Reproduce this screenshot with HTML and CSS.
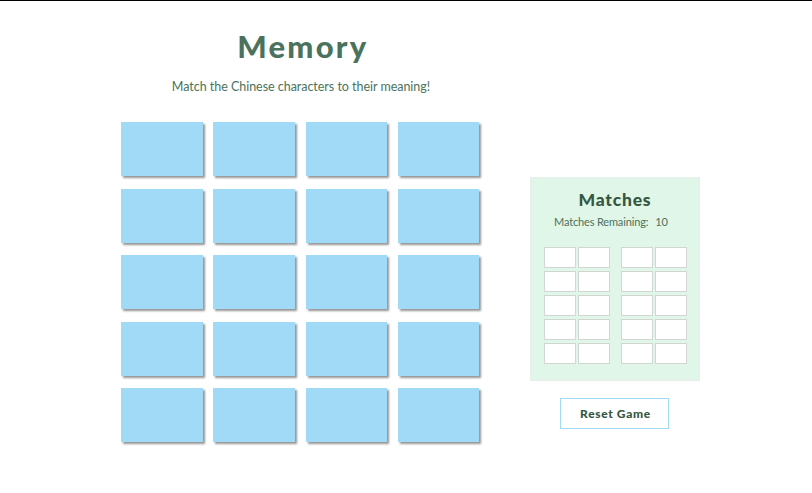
FILE: index.html
```
<!DOCTYPE html>
<html lang="en">
<head>
<meta charset="utf-8">
<title>Memory</title>
<link rel="stylesheet" href="styles.css">
</head>
<body>
<main class="game">
  <section class="play">
    <h1 class="title">Memory</h1>
    <p class="subtitle">Match the Chinese characters to their meaning!</p>
    <div class="board">
      <div class="card"></div><div class="card"></div><div class="card"></div><div class="card"></div>
      <div class="card"></div><div class="card"></div><div class="card"></div><div class="card"></div>
      <div class="card"></div><div class="card"></div><div class="card"></div><div class="card"></div>
      <div class="card"></div><div class="card"></div><div class="card"></div><div class="card"></div>
      <div class="card"></div><div class="card"></div><div class="card"></div><div class="card"></div>
    </div>
  </section>
  <aside class="side">
    <div class="panel">
      <h2 class="panel-title">Matches</h2>
      <p class="remaining"><span class="label">Matches Remaining:</span><span class="count">10</span></p>
      <div class="matches">
        <div class="slots">
          <i class="slot"></i><i class="slot"></i><i class="slot"></i><i class="slot"></i><i class="slot"></i>
          <i class="slot"></i><i class="slot"></i><i class="slot"></i><i class="slot"></i><i class="slot"></i>
        </div>
        <div class="slots">
          <i class="slot"></i><i class="slot"></i><i class="slot"></i><i class="slot"></i><i class="slot"></i>
          <i class="slot"></i><i class="slot"></i><i class="slot"></i><i class="slot"></i><i class="slot"></i>
        </div>
      </div>
    </div>
    <button class="reset">Reset Game</button>
  </aside>
</main>
</body>
</html>
```
FILE: styles.css
```
* { box-sizing: border-box; }
body {
  margin: 0;
  height: 493px;
  overflow: hidden;
  border-top: 1px solid #000;
  background: #fff;
  color: #4b725c;
  font-family: Lato, sans-serif;
}
h1, h2, p { margin: 0; white-space: nowrap; }
.game {
  display: flex;
  gap: 50px;
  padding-left: 121.3px;
}
.play { width: 358.7px; padding-top: 26px; }
.title {
  height: 40px;
  padding-left: 116px;
  font-size: 31px;
  font-weight: 900;
  line-height: 39px;
  letter-spacing: 2.2px;
}
.subtitle {
  height: 20px;
  margin-top: 10px;
  padding-left: 50.5px;
  font-size: 12.5px;
  line-height: 20px;
  letter-spacing: -0.03px;
}
.board {
  display: grid;
  grid-template-columns: repeat(4, 81.5px);
  grid-auto-rows: 54.2px;
  column-gap: 10.7px;
  row-gap: 12.3px;
  margin-top: 25.2px;
}
.card {
  background: #a1daf7;
  box-shadow: 2px 2px 2px rgba(0, 0, 0, 0.42);
}
.side {
  display: flex;
  flex-direction: column;
  align-items: flex-start;
  width: 170px;
  padding-top: 176px;
}
.panel {
  width: 170px;
  height: 204px;
  padding: 10px 13px 0;
  border: 1px solid #e8efeb;
  background: #e0f6e9;
}
.panel-title {
  height: 25px;
  padding-left: 34.5px;
  color: #35563f;
  font-size: 17.5px;
  font-weight: 900;
  line-height: 24px;
  letter-spacing: 0.8px;
}
.remaining {
  display: flex;
  gap: 7px;
  height: 16px;
  padding-left: 10px;
  font-size: 11px;
  line-height: 17px;
  letter-spacing: -0.15px;
}
.matches { display: flex; gap: 11px; margin-top: 18px; }
.slots {
  display: grid;
  grid-template-columns: repeat(2, 32px);
  grid-auto-rows: 21.4px;
  column-gap: 2px;
  row-gap: 2.5px;
}
.slot { border: 1px solid #d2d6d3; background: #fff; }
.reset {
  width: 109px;
  height: 31px;
  margin: 17px 0 0 30px;
  padding: 0 0 1px 2px;
  border: 1px solid #a1daf7;
  background: #fff;
  color: #35563f;
  font: 900 12px Lato, sans-serif;
  letter-spacing: 0.65px;
  white-space: nowrap;
}
```
